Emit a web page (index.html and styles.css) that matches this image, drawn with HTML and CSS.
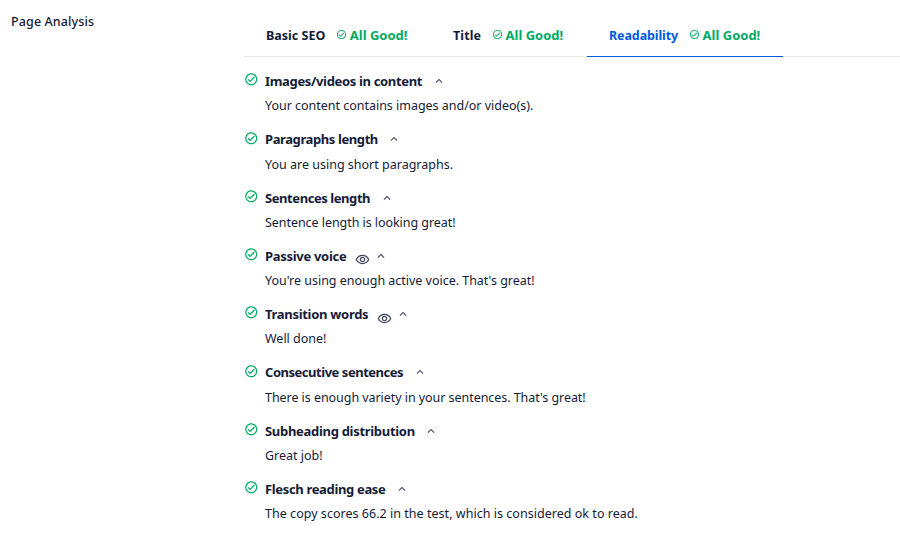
FILE: index.html
```
<!DOCTYPE html>
<html lang="en">
<head>
<meta charset="utf-8">
<title>Page Analysis</title>
<link rel="stylesheet" href="styles.css">
</head>
<body>
<svg class="defs" width="0" height="0">
  <symbol id="check" viewBox="0 0 24 24"><path d="M12 2C6.500 2 2 6.500 2 12s4.500 10 10 10 10-4.500 10-10S17.500 2 12 2zm0 18c-4.400 0-8-3.600-8-8s3.600-8 8-8 8 3.600 8 8-3.600 8-8 8zm4.600-12.400L10 14.200l-2.600-2.600L6 13l4 4 8-8z"/></symbol>
  <symbol id="caret" viewBox="0 0 24 24"><path d="M12 8l-6 6 1.410 1.410L12 10.830l4.590 4.580L18 14z"/></symbol>
  <symbol id="eye" viewBox="0 0 24 24"><path d="M12 6.500c3.790 0 7.170 2.130 8.820 5.500-1.650 3.370-5.030 5.500-8.820 5.500S4.830 15.370 3.180 12C4.830 8.630 8.210 6.500 12 6.500m0-2C7 4.500 2.730 7.610 1 12c1.730 4.390 6 7.500 11 7.500s9.270-3.110 11-7.500c-1.730-4.390-6-7.500-11-7.500zm0 5a2.500 2.500 0 0 1 0 5 2.500 2.500 0 0 1 0-5m0-2c-2.480 0-4.500 2.020-4.500 4.500s2.020 4.500 4.500 4.500 4.500-2.020 4.500-4.500-2.020-4.500-4.500-4.500z"/></symbol>
</svg>
<div class="settings">
  <div class="label">Page Analysis</div>
  <main class="panel">
    <nav class="tabs">
      <a class="tab seo"><span class="name">Basic SEO</span><svg class="ok"><use href="#check"/></svg><span class="good">All Good!</span></a>
      <a class="tab title"><span class="name">Title</span><svg class="ok"><use href="#check"/></svg><span class="good">All Good!</span></a>
      <a class="tab active"><span class="name">Readability</span><svg class="ok"><use href="#check"/></svg><span class="good">All Good!</span></a>
    </nav>
    <ul class="list">
      <li><svg class="status"><use href="#check"/></svg><div><h3><span>Images/videos in content</span><svg class="caret"><use href="#caret"/></svg></h3><p>Your content contains images and/or video(s).</p></div></li>
      <li><svg class="status"><use href="#check"/></svg><div><h3><span>Paragraphs length</span><svg class="caret"><use href="#caret"/></svg></h3><p>You are using short paragraphs.</p></div></li>
      <li><svg class="status"><use href="#check"/></svg><div><h3><span>Sentences length</span><svg class="caret"><use href="#caret"/></svg></h3><p>Sentence length is looking great!</p></div></li>
      <li><svg class="status"><use href="#check"/></svg><div><h3><span>Passive voice</span><svg class="eye"><use href="#eye"/></svg><svg class="caret"><use href="#caret"/></svg></h3><p>You're using enough active voice. That's great!</p></div></li>
      <li><svg class="status"><use href="#check"/></svg><div><h3><span>Transition words</span><svg class="eye"><use href="#eye"/></svg><svg class="caret"><use href="#caret"/></svg></h3><p>Well done!</p></div></li>
      <li><svg class="status"><use href="#check"/></svg><div><h3><span>Consecutive sentences</span><svg class="caret"><use href="#caret"/></svg></h3><p>There is enough variety in your sentences. That's great!</p></div></li>
      <li><svg class="status"><use href="#check"/></svg><div><h3><span>Subheading distribution</span><svg class="caret"><use href="#caret"/></svg></h3><p>Great job!</p></div></li>
      <li><svg class="status"><use href="#check"/></svg><div><h3><span>Flesch reading ease</span><svg class="caret"><use href="#caret"/></svg></h3><p>The copy scores 66.2 in the test, which is considered ok to read.</p></div></li>
    </ul>
  </main>
</div>
</body>
</html>
```
FILE: styles.css
```
* { box-sizing: border-box; }
body { margin: 0; background: #fff; color: #141b38; font: 12.5px/20px "Noto Sans", sans-serif; overflow: hidden; }
svg { fill: currentColor; flex: none; }
.defs { position: absolute; }
.settings { display: grid; grid-template-columns: 244px 1fr; height: 538px; }
.label { padding: 12px 0 0 11px; font-weight: 500; letter-spacing: .12px; }
.tabs { display: flex; height: 57px; padding-top: 14px; border-bottom: 1px solid #e8e8eb; }
.tab { display: flex; align-items: center; height: 43px; padding: 0 0 0 22px; font-weight: 700; white-space: nowrap; }
.seo { width: 187px; }
.title { width: 156px; }
.title .name { letter-spacing: .1px; }
.active { width: 195.5px; padding-top: 1px; color: #005ae0; border-bottom: 1px solid #005ae0; }
.active .name { letter-spacing: -.1px; }
.good { margin-top: -2px; color: #00aa63; font-size: 13px; letter-spacing: 0; }
.ok { width: 11px; height: 11px; margin: -2px 3px 0 10.5px; color: #00aa63; }
.list { list-style: none; margin: 0; padding: 14px 0 0; }
li { display: flex; height: 58.3px; }
.status { width: 14.500px; height: 14.500px; margin: 1.300px 6.500px 0 0; color: #00aa63; }
h3 { display: flex; align-items: center; height: 20px; margin: 0; font-size: 13px; font-weight: 700; letter-spacing: -.34px; }
p { margin: 5.200px 0 0; white-space: nowrap; letter-spacing: -.02px; }
.caret { width: 14px; height: 14px; margin: 0 0 0 9.500px; color: #434960; }
.eye { width: 15px; height: 15px; margin: 8px -5.500px 0 8.500px; color: #434960; }
li:nth-child(2) h3 { letter-spacing: -.4px; }
li:nth-child(3) h3 { letter-spacing: -.43px; }
li:nth-child(4) h3, li:nth-child(5) h3, li:nth-child(7) h3 { letter-spacing: -.3px; }
li:nth-child(6) h3 { letter-spacing: -.47px; }
li:nth-child(2) p { margin-top: 6px; letter-spacing: 0; }
li:nth-child(3) p, li:nth-child(6) p { letter-spacing: -.055px; }
li:nth-child(8) p { letter-spacing: .03px; }
```
